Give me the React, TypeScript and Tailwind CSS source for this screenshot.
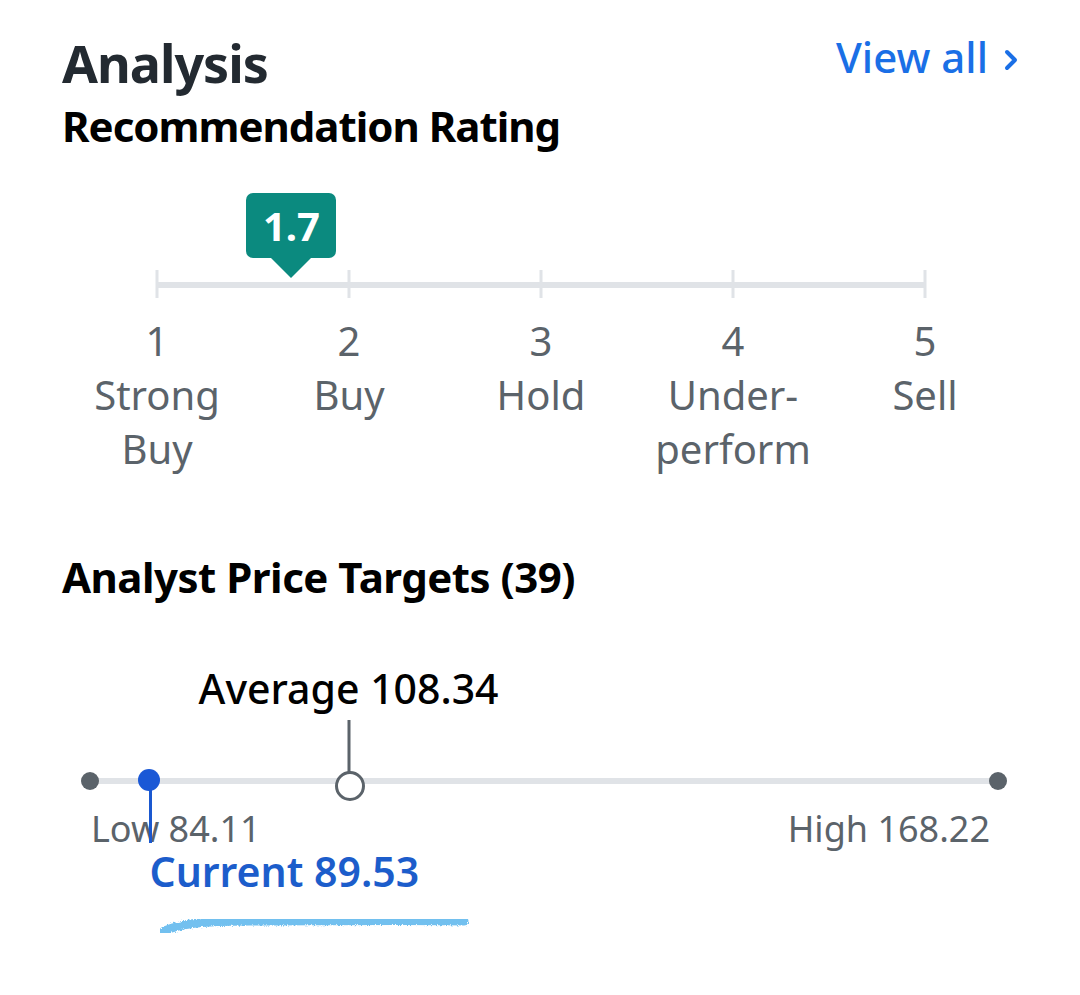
import React from 'react'

const font = { fontFamily: '"Noto Sans", "Open Sans", sans-serif' }

const ratings = [
  { n: '1', label: ['Strong', 'Buy'] },
  { n: '2', label: ['Buy'] },
  { n: '3', label: ['Hold'] },
  { n: '4', label: ['Under-', 'perform'] },
  { n: '5', label: ['Sell'] },
]

const TICK = 192
const rating = 1.7

const low = 84.11
const high = 168.22
const average = 108.34
const current = 89.53
const TRACK_W = 908

function RatingChart() {
  const badgeX = (rating - 1) * TICK
  return (
    <div className="mt-[46px] ml-[61px] w-[960px]">
      <div className="relative h-[110px]">
        <div className="absolute left-[96px] right-[96px] top-0 h-full">
          {/* track */}
          <div className="absolute left-0 right-0 top-[89px] h-[6px] bg-[#e0e3e7]" />
          {ratings.map((r, i) => (
            <div
              key={r.n}
              className="absolute top-[77px] h-[28px] w-[3px] -translate-x-1/2 bg-[#e0e3e7]"
              style={{ left: i * TICK }}
            />
          ))}
          {/* badge */}
          <div className="absolute top-0 -translate-x-1/2" style={{ left: badgeX }}>
            <div className="flex h-[65px] w-[90px] items-center justify-center rounded-[7px] bg-[#0b8a7f] text-[40px] font-bold leading-none text-white">
              1.7
            </div>
            <div className="mx-auto h-0 w-0 border-x-[20px] border-t-[20px] border-x-transparent border-t-[#0b8a7f]" />
          </div>
        </div>
      </div>
      <div className="mt-[11px] grid grid-cols-5 text-center text-[40px] leading-[54px] text-[#5b636a]">
        {ratings.map((r) => (
          <div key={r.n}>
            <div>{r.n}</div>
            {r.label.map((l) => (
              <div key={l}>{l}</div>
            ))}
          </div>
        ))}
      </div>
    </div>
  )
}

function PriceChart() {
  const pos = (v: number) => ((v - low) / (high - low)) * TRACK_W
  const avgX = pos(average) - 3
  const curX = pos(current)
  return (
    <div className="mt-[70px] ml-[90px] w-[908px]">
      <div className="relative z-10 h-[132px]">
        <div
          className="absolute top-0 -translate-x-1/2 whitespace-nowrap text-[41px] font-medium leading-[40px] text-black"
          style={{ left: avgX }}
        >
          Average 108.34
        </div>
        <div
          className="absolute top-[52px] h-[52px] w-[3px] -translate-x-1/2 bg-[#5b636a]"
          style={{ left: avgX }}
        />
        <div className="absolute left-0 right-0 top-[110px] h-[6px] bg-[#e0e3e7]" />
        <div className="absolute left-0 top-[104px] h-[18px] w-[18px] -translate-x-1/2 rounded-full bg-[#5b636a]" />
        <div className="absolute left-full top-[104px] h-[18px] w-[18px] -translate-x-1/2 rounded-full bg-[#5b636a]" />
        <div
          className="absolute top-[103px] h-[30px] w-[30px] -translate-x-1/2 rounded-full border-[3px] border-[#5b636a] bg-white"
          style={{ left: avgX + 1 }}
        />
        <div
          className="absolute top-[112px] h-[63px] w-[3px] bg-[#1a58d0]"
          style={{ left: curX }}
        />
        <div
          className="absolute top-[101px] h-[22px] w-[22px] -translate-x-1/2 rounded-full bg-[#1a58d6]"
          style={{ left: curX }}
        />
      </div>
      <div className="mt-[12px] flex justify-between pr-[8px] text-[36px] leading-[34px] text-[#5b636a]">
        <span className="pl-px">Low 84.11</span>
        <span>High 168.22</span>
      </div>
      <div
        className="mt-[5px] text-[41px] font-semibold leading-[40px] text-[#1c5dcb]"
        style={{ paddingLeft: curX + 1 }}
      >
        Current 89.53
      </div>
      <svg width="320" height="32" viewBox="0 0 320 32" className="mt-[19px] ml-[70px] block">
        <defs>
          <filter id="chalk">
            <feTurbulence type="fractalNoise" baseFrequency="1.2" numOctaves="2" result="n" />
            <feDisplacementMap in="SourceGraphic" in2="n" scale="4" />
          </filter>
        </defs>
        <path
          d="M4 21 C 20 14, 40 11, 90 11 S 260 10, 304 11"
          fill="none"
          stroke="#4fb1ec"
          strokeWidth="9"
          strokeLinecap="round"
          opacity="0.8"
          filter="url(#chalk)"
        />
      </svg>
    </div>
  )
}

export default function App() {
  return (
    <div className="min-h-[995px] w-[1080px] bg-white" style={font}>
      <div className="flex items-start justify-between pl-[62px] pr-[60px] pt-[37px]">
        <h1 className="text-[52px] font-bold leading-[52px] tracking-[-1px] text-[#232a31]">Analysis</h1>
        <a className="flex items-center text-[42px] font-medium leading-[40px] text-[#1a6fe6]">
          View all
          <svg width="18" height="26" viewBox="0 0 18 26" className="ml-[14px] mt-[6px]">
            <path d="M5 5 L13 13 L5 21" fill="none" stroke="#1a6fe6" strokeWidth="4" strokeLinecap="round" strokeLinejoin="round" />
          </svg>
        </a>
      </div>
      <h2 className="mt-[16px] pl-[62px] text-[42px] font-bold leading-[42px] tracking-[-1px] text-black">
        Recommendation Rating
      </h2>
      <RatingChart />
      <h2 className="mt-[80px] pl-[62px] text-[42px] font-bold leading-[42px] tracking-[-0.5px] text-black">
        Analyst Price Targets (39)
      </h2>
      <PriceChart />
    </div>
  )
}
